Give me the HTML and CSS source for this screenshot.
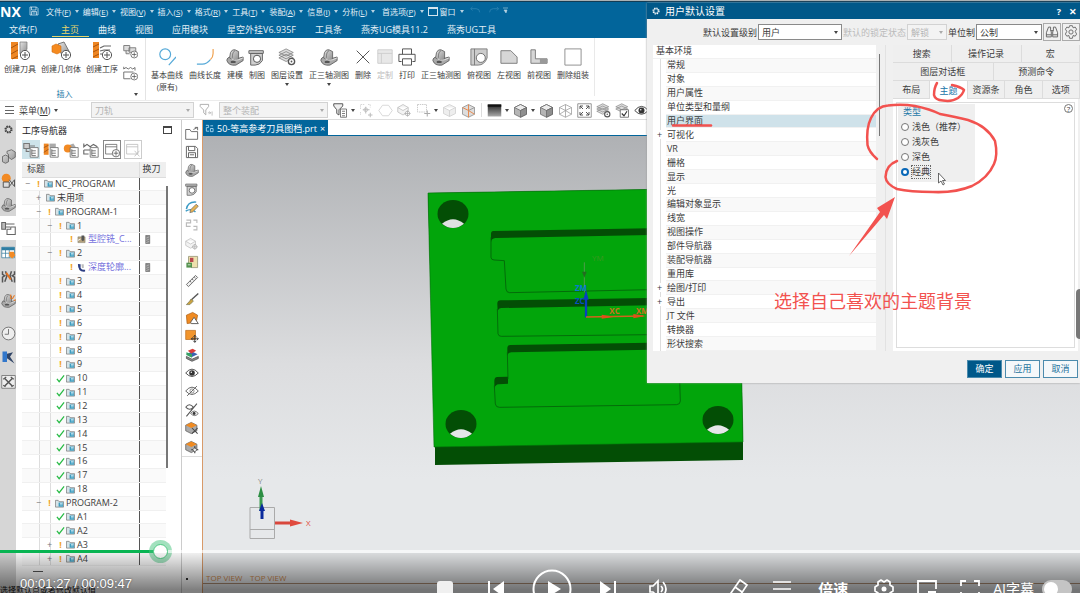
FILE: index.html
```html
<!DOCTYPE html>
<html lang="zh-CN">
<head>
<meta charset="utf-8">
<title>NX - 用户默认设置</title>
<link rel="stylesheet" href="styles.css">
</head>
<body>
<svg class="sprite" aria-hidden="true">
  <defs>
    <linearGradient id="metal" x1="0" y1="0" x2="1" y2="1"><stop offset="0" stop-color="#e4e4e4"/><stop offset="1" stop-color="#8b8b8b"/></linearGradient>
    <linearGradient id="dark" x1="0" y1="0" x2="0" y2="1"><stop offset="0" stop-color="#222"/><stop offset="1" stop-color="#aaa"/></linearGradient>
  </defs>
  <symbol id="plus" viewBox="0 0 20 20"><circle cx="15" cy="14" r="4.6" fill="#fff" stroke="#555"/><path d="M15 11v6M12 14h6" stroke="#555"/></symbol>
  <symbol id="tool" viewBox="0 0 20 20"><path d="M1 1h7v17H1z" fill="#ee8623"/><path d="M1 7l7-4M1 13l7-4M2 18l6-3" stroke="#a9540c"/><path d="M10 1h7v7l-3 5h-4z" fill="url(#metal)" stroke="#777" stroke-width=".7"/><use href="#plus"/></symbol>
  <symbol id="geom" viewBox="0 0 20 20"><path d="M7 3l6-2 6 11-8 3z" fill="url(#metal)" stroke="#777"/><path d="M1 5l4-2 5 2v6l-4 2-5-2z" fill="#f58a1f" stroke="#d56d0b" stroke-width=".6"/><use href="#plus"/></symbol>
  <symbol id="oper" viewBox="0 0 20 20"><path d="M1 1h6v16H1z" fill="#ee8623"/><path d="M1 6l6-3M1 11l6-3M1 16l6-3" stroke="#a9540c"/><path d="M8 7l4-2h7M8 10l4-1h6M8 13h3" fill="none" stroke="#666" stroke-width="1.2"/><use href="#plus"/></symbol>
  <symbol id="prog" viewBox="0 0 20 20"><path d="M1 2h8v7H1zM8 5h9v6H8zM4 9v4h5" fill="#ddd" stroke="#777" stroke-width="1.2"/><use href="#plus"/></symbol>
  <symbol id="meth" viewBox="0 0 20 20"><path d="M1 1v3l3-2 3 2 3-2 3 2 3-2v4M1 8h13M1 8v9h9" fill="none" stroke="#666" stroke-width="1.2"/><use href="#plus"/></symbol>
  <symbol id="curve" viewBox="0 0 20 20"><circle cx="8" cy="7" r="6" fill="none" stroke="#55a9d8" stroke-width="1.3"/><path d="M12 19l8-9" stroke="#55a9d8" stroke-width="1.3"/></symbol>
  <symbol id="length" viewBox="0 0 20 20"><path d="M1 18h6q5 0 9-5" fill="none" stroke="#55a9d8" stroke-width="1.3"/><path d="M16 13q3-3 3-7V1" fill="none" stroke="#efa14f" stroke-width="1.3"/></symbol>
  <symbol id="model" viewBox="0 0 20 20"><path d="M1 14q0-4 5-4l6 2 7-2v4l-8 5q-8 1-10-5z" fill="#a9a9a9" stroke="#5d5d5d"/><path d="M4 11L5 5q2-4 5-3l4 2v8l-4 2z" fill="url(#metal)" stroke="#666"/><path d="M10 3q-3 1-3 8" fill="none" stroke="#777"/><path d="M6 12q3 3 8 1l5-2" fill="none" stroke="#e6e6e6"/><ellipse cx="8" cy="15.500" rx="3" ry="1.300" fill="#555"/></symbol>
  <symbol id="draft" viewBox="0 0 20 20"><path d="M1 3h16v3H1zM3 6h13v8q-3 5-8 5H3z" fill="#d0d0d0" stroke="#666" stroke-width="1.1"/><circle cx="10" cy="12" r="4" fill="#fff" stroke="#555" stroke-width="1.1"/></symbol>
  <symbol id="layers" viewBox="0 0 20 20"><path d="M1 11l8 4 8-4-8-4zM1 8l8 4 8-4-8-4zM1 5l8 4 8-4-8-4z" fill="#ddd" stroke="#777" stroke-width=".8"/><circle cx="15" cy="15" r="3.5" fill="#fff" stroke="#555" stroke-width="1.5"/><circle cx="15" cy="15" r="1" fill="#555"/></symbol>
  <symbol id="laycheck" viewBox="0 0 20 20"><path d="M1 8l8 4 8-4-8-4zM1 5l8 4 8-4-8-4z" fill="#ddd" stroke="#777" stroke-width=".8"/><path d="M7 9h11v10H7z" fill="#fff" stroke="#555"/><path d="M9 14l3 3 4-6" fill="none" stroke="#333" stroke-width="1.500"/></symbol>
  <symbol id="del" viewBox="0 0 20 20"><path d="M3 3l14 14M17 3L3 17" stroke="#555" stroke-width="1.1"/></symbol>
  <symbol id="custom" viewBox="0 0 20 20"><path d="M2 2h16v15H2z" fill="#e8e8e8" stroke="#ccc"/><path d="M2 6h16M6 6v11" stroke="#ccc"/></symbol>
  <symbol id="print" viewBox="0 0 20 20"><path d="M5 7V1h10v6M4 15H1V7h18v8h-3M5 12h10v7H5z" fill="#fff" stroke="#555" stroke-width="1.1"/></symbol>
  <symbol id="top" viewBox="0 0 20 20"><path d="M1 1h18v10q-3 8-10 8H1z" fill="#ccc" stroke="#777"/><path d="M5 1v18" stroke="#777"/><circle cx="12" cy="11" r="5" fill="#fff" stroke="#666"/></symbol>
  <symbol id="left" viewBox="0 0 20 20"><path d="M1 3h11l7 7v7H1z" fill="#d7d7d7" stroke="#777"/></symbol>
  <symbol id="front" viewBox="0 0 20 20"><path d="M1 2h5v10h13v5H1z" fill="#d7d7d7" stroke="#777"/><path d="M11 12h8v5h-8z" fill="#999"/></symbol>
  <symbol id="blank" viewBox="0 0 20 20"><path d="M1 1h18v18H1z" fill="#fff" stroke="#888"/></symbol>
  <symbol id="save" viewBox="0 0 20 20"><path d="M2 2h13l3 3v13H2zM5 2v6h9V2M5 18v-7h10v7M7 14h6" fill="none" stroke="currentColor" stroke-width="1.4"/></symbol>
  <symbol id="funnel" viewBox="0 0 20 20"><path d="M1 2h12v3L9 10v7l-3-3v-4L1 5z" fill="none" stroke="currentColor" stroke-width="1.3"/><path d="M12 14h4l-2-2m2 2l-2 2M18 12v6" fill="none" stroke="currentColor"/></symbol>
  <symbol id="flist" viewBox="0 0 20 20"><path d="M1 1h12v3L8 9v7l-3-2V9L1 4z" fill="#eee" stroke="#555" stroke-width="1.3"/><path d="M10 8h8v11h-8z" fill="#fff" stroke="#555"/><path d="M12 11h4M12 14h4M12 17h4" stroke="#555"/></symbol>
  <symbol id="snap" viewBox="0 0 20 20"><path d="M2 8V2h6M2 12v4M12 2h3v4" fill="none" stroke="#ccc" stroke-dasharray="2 1"/><path d="M9 5v9M5 9h9M15 13v6M12 16h6" stroke="#b9b9b9" stroke-width="1.3"/><circle cx="9" cy="9" r="2.5" fill="none" stroke="#bbb"/></symbol>
  <symbol id="hex" viewBox="0 0 20 20"><path d="M6 3h8l5 7-5 7H6l-5-7z" fill="none" stroke="#ccc"/></symbol>
  <symbol id="faint" viewBox="0 0 20 20"><path d="M2 6l8-4 8 4v8l-8 4-8-4zM2 6l8 4 8-4M10 10v8" fill="#eee" stroke="#ccc"/></symbol>
  <symbol id="faintplus" viewBox="0 0 20 20"><path d="M1 6l7-4 7 4v6l-7 4-7-4zM1 6l7 4 7-4" fill="#f3f3f3" stroke="#bbb"/><circle cx="14" cy="14" r="3" fill="#fff" stroke="#aaa"/><path d="M14 10v8M10 14h8" stroke="#aaa"/></symbol>
  <symbol id="region" viewBox="0 0 20 20"><path d="M2 2h12v10H2z" fill="none" stroke="#bbb" stroke-dasharray="2 1"/><path d="M15 10v8M11 14h8" stroke="#aaa" stroke-width="1.4"/></symbol>
  <symbol id="ocube" viewBox="0 0 20 20"><path d="M2 6l8-4 8 4v9l-8 4-8-4z" fill="#ddd" stroke="#888"/><path d="M2 6l8 4v9M10 2v8l8 5" fill="none" stroke="#e8894c" stroke-width="1.3"/><path d="M10 10l8-4" stroke="#888"/></symbol>
  <symbol id="grad" viewBox="0 0 20 20"><path d="M1 2h18v16H1z" fill="url(#dark)"/><path d="M1 2h18v3H1z" fill="#111"/></symbol>
  <symbol id="cube" viewBox="0 0 20 20"><path d="M2 6l8-4 8 4v9l-8 4-8-4z" fill="#b5b5b5" stroke="#666"/><path d="M2 6l8-4 8 4-8 4z" fill="#ececec" stroke="#666"/><path d="M10 10v9l8-4V6z" fill="#8f8f8f" stroke="#666"/></symbol>
  <symbol id="wire" viewBox="0 0 20 20"><path d="M2 6l8-4 8 4v9l-8 4-8-4zM2 6l8 4 8-4M10 10v9M2 15l8-5 8 5M10 2v8" fill="none" stroke="#999"/></symbol>
  <symbol id="fit" viewBox="0 0 20 20"><path d="M1 1h18v18H1z" fill="#fff" stroke="#777"/><path d="M4 8V4h4M12 4h4v4M16 12v4h-4M8 16H4v-4M4 4l4 4M16 4l-4 4M16 16l-4-4M4 16l4-4" fill="none" stroke="#444" stroke-width="1.2"/></symbol>
  <symbol id="eye" viewBox="0 0 20 20"><path d="M1 10q9-11 18 0-9 10-18 0z" fill="#fff" stroke="#444" stroke-width="1.3"/><circle cx="10" cy="10" r="4" fill="#333"/><circle cx="9" cy="9" r="1" fill="#fff"/></symbol>
  <symbol id="noeye" viewBox="0 0 20 20"><path d="M1 10q9-11 18 0-9 10-18 0zM3 17L17 3" fill="none" stroke="#666" stroke-width="1.4"/><circle cx="10" cy="10" r="3" fill="none" stroke="#666"/></symbol>
  <symbol id="gear" viewBox="0 0 20 20"><circle cx="10" cy="10" r="7.5" fill="none" stroke="currentColor" stroke-width="3" stroke-dasharray="3.4 2.5"/><circle cx="10" cy="10" r="5.6" fill="none" stroke="currentColor" stroke-width="2"/></symbol>
  <symbol id="parts" viewBox="0 0 20 20"><path d="M2 10l4-2 4 2v7l-4 2-4-2zM8 3l6-2 5 3v7l-5 3-4-3V7L8 6z" fill="url(#metal)" stroke="#555"/></symbol>
  <symbol id="rel" viewBox="0 0 20 20"><circle cx="7" cy="7" r="6" fill="#f28a24"/><path d="M3 12h8v7H3zM11 9l7 9V9l-7 9" fill="#ddd" stroke="#555" stroke-width="1.3"/></symbol>
  <symbol id="opnav" viewBox="0 0 20 20"><path d="M1 2h5v9H1zM6 4h12M6 8h6" fill="#bbb" stroke="#666" stroke-width="1.4"/><path d="M8 11h5v-3h6v10H8z" fill="#fff" stroke="#666" stroke-width="1.4"/></symbol>
  <symbol id="grid" viewBox="0 0 20 20"><path d="M1 3h17v14H1z" fill="#fff" stroke="#3b7f9f"/><path d="M1 3h17v4H1z" fill="#2d7da3"/><path d="M1 11h17M6 4v13M11 4v13" stroke="#3b7f9f"/><path d="M11 9h6l2 5-4 4-4-3z" fill="#f28a24"/></symbol>
  <symbol id="move" viewBox="0 0 20 20"><path d="M2 3v4l3 2-3 2v7M6 3l2 6-3 8M18 3v4l-3 2 3 2v7M14 3l-2 6 3 8" fill="none" stroke="#555" stroke-width="2"/><path d="M7 5l6 9" stroke="#e8701c" stroke-width="2.500"/></symbol>
  <symbol id="sparks" viewBox="0 0 20 20"><use href="#model"/><path d="M13 8V2M15 8l3-5M17 10l3-1" stroke="#ed7d25" stroke-width="1.5"/></symbol>
  <symbol id="clock" viewBox="0 0 20 20"><circle cx="10" cy="10" r="8.5" fill="#eee" stroke="#777" stroke-width="1.3"/><path d="M10 4v7H5" fill="none" stroke="#777" stroke-width="1.3"/></symbol>
  <symbol id="blue" viewBox="0 0 20 20"><path d="M2 2h6v14H2z" fill="#3277cb"/><path d="M8 5l8-2-4 6 6 9-10-7z" fill="#314567"/></symbol>
  <symbol id="cross" viewBox="0 0 20 20"><path d="M1 2h18v17H1z" fill="#eee" stroke="#666"/><path d="M5 6l10 10M15 6L5 16" stroke="#555" stroke-width="2"/><path d="M3 7l4-3M13 4l4 3M3 15l3 2M14 17l3-2" stroke="#555" stroke-width="1.500"/></symbol>
  <symbol id="treebox" viewBox="0 0 20 20"><path d="M9 7h10v12H9z" fill="#fff" stroke="#666"/><path d="M11 9v8h5M11 11h5M11 14h5" fill="none" stroke="#555"/></symbol>
  <symbol id="v1" viewBox="0 0 20 20"><path d="M1 2h7v6H1zM4 8v4h4M8 5h7" fill="#ccc" stroke="#777" stroke-width="1.3"/><use href="#treebox"/></symbol>
  <symbol id="v2" viewBox="0 0 20 20"><path d="M1 2h6v14H1z" fill="#ee8623"/><path d="M1 7l6-3M1 13l6-4" stroke="#9c5014"/><path d="M8 2h8v5H8z" fill="#aaa"/><use href="#treebox"/></symbol>
  <symbol id="v3" viewBox="0 0 20 20"><path d="M7 4l6-2 4 6-8 4z" fill="#aaa"/><circle cx="6" cy="8" r="5" fill="#f28a24"/><use href="#treebox"/></symbol>
  <symbol id="v4" viewBox="0 0 20 20"><path d="M1 2v4l4-3 4 3 4-3 5 3M1 10h8M1 10v5h6" fill="none" stroke="#666" stroke-width="1.4"/><use href="#treebox"/></symbol>
  <symbol id="v5" viewBox="0 0 20 20"><path d="M2 3h14v12H2zM2 6h14" fill="#fff" stroke="#666"/><use href="#plus"/></symbol>
  <symbol id="v6" viewBox="0 0 20 20"><path d="M2 3h14v12H2zM2 6h14M12 11l6 7M18 11l-6 7" fill="#fff" stroke="#bbb"/></symbol>
  <symbol id="folder" viewBox="0 0 20 20"><path d="M1 3h6l2 3h10v12H1z" fill="#d5e3e8" stroke="#777" stroke-width="1.6"/><path d="M8 8h10v9H8z" fill="#3a9cc0"/><path d="M11 10h6M11 13h6" stroke="#e5f5fb" stroke-width="1.5"/></symbol>
  <symbol id="check" viewBox="0 0 20 20"><path d="M2 11l5 6L18 3" fill="none" stroke="#27bb45" stroke-width="2.8"/></symbol>
  <symbol id="mill" viewBox="0 0 20 20"><path d="M2 4h16v13H2z" fill="#b6a37e" stroke="#776"/><path d="M10 1h6v10l-3 3-3-3z" fill="#555"/><path d="M2 12l6-3" stroke="#fff" stroke-width="2"/></symbol>
  <symbol id="contour" viewBox="0 0 20 20"><path d="M2 2l6 1v8q3 5 10 4v4Q2 21 2 2z" fill="#2c3d83"/><path d="M10 3h5v8h-4z" fill="#bbb"/></symbol>
  <symbol id="cutter" viewBox="0 0 20 20"><path d="M6 1h9v18H6z" fill="#888" stroke="#444"/><path d="M7 7l7-3M7 12l7-3M7 17l7-3" stroke="#ddd"/></symbol>
  <symbol id="open" viewBox="0 0 20 20"><path d="M1 5h6l2 3h9v11H1zM12 5l6-3m-4 0h4v4" fill="none" stroke="#666" stroke-width="1.3"/></symbol>
  <symbol id="sketch" viewBox="0 0 20 20"><path d="M2 13q2-11 14-10M1 16q8-5 14 1" fill="none" stroke="#3c9bc5" stroke-width="2"/><path d="M8 14l8-8 3 3-8 8-4 1z" fill="#e6b352" stroke="#666"/></symbol>
  <symbol id="pattern" viewBox="0 0 20 20"><path d="M2 3h6v4H2v5h6M12 3h5v4M12 17h5v-5h-5" fill="none" stroke="#bbb" stroke-width="1.6"/></symbol>
  <symbol id="box" viewBox="0 0 20 20"><path d="M5 2h13v16H9v-6H5z" fill="#eee0ad" stroke="#886"/><path d="M7 4h5v6H7z" fill="#b8474d"/><path d="M2 11h8v7H2z" fill="#54924e"/><path d="M4 14h4" stroke="#fff"/></symbol>
  <symbol id="ruler" viewBox="0 0 20 20"><path d="M2 15L15 2l3 3L5 18zM7 10l2 2M10 7l2 2M13 4l2 2" fill="#eee" stroke="#666" stroke-width="1.3"/></symbol>
  <symbol id="brush" viewBox="0 0 20 20"><path d="M19 2L8 12" stroke="#555" stroke-width="2"/><path d="M9 10l3 3-5 5H2q4-4 7-8z" fill="#caa23f" stroke="#775"/></symbol>
  <symbol id="face" viewBox="0 0 20 20"><path d="M2 6l9-4 7 4-2 10-13 2z" fill="#f08b22" stroke="#aa5b10"/><path d="M8 16l5-7 6 9H9z" fill="#fff" stroke="#555" stroke-width="1.3"/></symbol>
  <symbol id="orange" viewBox="0 0 20 20"><path d="M1 2h14v13H1z" fill="#f2952c" stroke="#bd6a17"/><path d="M14 9v10M9 14h10M12 11l2-2 2 2M12 17l2 2 2-2M11 12l-2 2 2 2M17 12l2 2-2 2" fill="none" stroke="#333" stroke-width="1.300"/></symbol>
  <symbol id="rgb" viewBox="0 0 20 20"><path d="M2 12l8 4 9-4v3l-9 4-8-4z" fill="#888" stroke="#444"/><path d="M2 9l8 4 8-4-8-4z" fill="#3a62b0"/><path d="M2 6v4l8 4V9z" fill="#37a163"/><path d="M4 4l7-3 5 3-7 4z" fill="#db3e3a"/></symbol>
  <symbol id="botheye" viewBox="0 0 20 20"><path d="M1 6q5-7 11 0-5 6-11 0M2 19L17 1" fill="none" stroke="#555" stroke-width="1.5"/><path d="M8 15q5-7 11 0-5 6-11 0z" fill="#eee" stroke="#444"/><circle cx="13" cy="15" r="2" fill="#333"/></symbol>
  <symbol id="cubetool" viewBox="0 0 20 20"><path d="M1 6l8-4 8 4v8l-8 4-8-4z" fill="#aaa" stroke="#555"/><path d="M1 6l8-4 8 4-8 4z" fill="#f08b22"/><path d="M10 10l8 8M18 10l-8 8" stroke="#444" stroke-width="1.500"/></symbol>
  <symbol id="cubemove" viewBox="0 0 20 20"><path d="M1 6l8-4 8 4v8l-8 4-8-4z" fill="#aaa" stroke="#555"/><path d="M1 6l8-4 8 4-8 4z" fill="#f08b22"/><path d="M14 9v10M9 14h10" stroke="#333" stroke-width="1.500"/><path d="M14 11l3 3-3 3-3-3z" fill="#eee" stroke="#444"/></symbol>
</svg>

<div class="app">
  <header class="banner">
    <div class="titlebar">
      <strong class="brand">NX</strong>
      <button class="tb-save" aria-label="保存"><svg><use href="#save"/></svg></button>
      <nav class="menus" aria-label="菜单栏">
        <button>文件(<u>F</u>)</button><button>编辑(<u>E</u>)</button><button>视图(<u>V</u>)</button><button>插入(<u>S</u>)</button><button>格式(<u>R</u>)</button><button>工具(<u>T</u>)</button><button>装配(<u>A</u>)</button><button>信息(<u>I</u>)</button><button>分析(<u>L</u>)</button><button class="prefs">首选项(<u>P</u>)</button><button class="window"><i class="win"></i>窗口</button>
        <svg class="history" viewBox="0 0 42 10"><path d="M3 3h6q4 0 4 4M3 3l2-2M3 3l2 2M34 3h-6q-4 0-4 4M34 3l-2-2M34 3l-2 2" transform="scale(.9)" fill="none" stroke="#2a80b0"/><path d="M35 2h5M36 4h3l-1 3z" fill="#b8d3e2" stroke="#b8d3e2" stroke-width=".6"/></svg>
      </nav>
    </div>
    <nav class="tabs" aria-label="功能区">
      <a href="#" class="file">文件(F)</a><a href="#" class="active">主页</a><a href="#">曲线</a><a href="#">视图</a><a href="#">应用模块</a><a href="#">星空外挂V6.935F</a><a href="#">工具条</a><a href="#">燕秀UG模具11.2</a><a href="#">燕秀UG工具</a>
    </nav>
  </header>

  <section class="ribbon">
    <div class="insert">
      <div class="insert-row">
        <button class="rb"><svg><use href="#tool"/></svg>创建刀具</button>
        <button class="rb"><svg><use href="#geom"/></svg>创建几何体</button>
        <button class="rb"><svg><use href="#oper"/></svg>创建工序</button>
        <div class="stack"><button aria-label="创建程序"><svg><use href="#prog"/></svg></button><button aria-label="创建方法"><svg><use href="#meth"/></svg></button></div>
      </div>
      <div class="insert-title"><span>插入</span><i class="caret"></i></div>
    </div>
    <div class="views">
      <button class="rb"><svg><use href="#curve"/></svg>基本曲线<br>(原有)</button>
      <button class="rb"><svg><use href="#length"/></svg>曲线长度</button>
      <button class="rb"><svg><use href="#model"/></svg>建模</button>
      <button class="rb"><svg><use href="#draft"/></svg>制图</button>
      <button class="rb"><svg><use href="#layers"/></svg>图层设置<i class="caret"></i></button>
      <button class="rb"><svg><use href="#model"/></svg>正三轴测图<i class="caret"></i></button>
      <button class="rb"><svg><use href="#del"/></svg>删除</button>
      <button class="rb off" disabled><svg><use href="#custom"/></svg>定制</button>
      <button class="rb"><svg><use href="#print"/></svg>打印</button>
      <button class="rb"><svg><use href="#model"/></svg>正三轴测图</button>
      <button class="rb"><svg><use href="#top"/></svg>俯视图</button>
      <button class="rb"><svg><use href="#left"/></svg>左视图</button>
      <button class="rb"><svg><use href="#front"/></svg>前视图</button>
      <button class="rb"><svg><use href="#blank"/></svg>删除组装</button>
    </div>
  </section>

  <section class="selbar">
    <button class="menu-btn"><i class="burger"></i>菜单(<u>M</u>)<i class="caret"></i></button>
    <span class="pick path"><select disabled aria-label="类型过滤器"><option>刀轨</option></select></span>
    <svg class="pale"><use href="#funnel"/></svg>
    <span class="pick scope"><select disabled aria-label="选择范围"><option>整个装配</option></select></span>
    <div class="sel-icons">
      <svg><use href="#flist"/></svg><i class="caret"></i><svg><use href="#snap"/></svg><svg><use href="#hex"/></svg><svg><use href="#faintplus"/></svg><svg><use href="#region"/></svg><i class="caret"></i><svg><use href="#faint"/></svg><svg><use href="#ocube"/></svg><i class="rule"></i><svg><use href="#grad"/></svg><i class="caret"></i><svg><use href="#cube"/></svg><i class="caret"></i><svg><use href="#cube"/></svg><svg><use href="#wire"/></svg><svg><use href="#fit"/></svg><svg><use href="#layers"/></svg><svg><use href="#laycheck"/></svg><svg><use href="#eye"/></svg>
    </div>
  </section>

  <main class="work">
    <nav class="rail" aria-label="资源条">
      <button aria-label="设置" class="cfg"><svg><use href="#gear"/></svg></button>
      <button aria-label="装配导航器"><svg><use href="#parts"/></svg></button>
      <button aria-label="约束导航器"><svg><use href="#rel"/></svg></button>
      <button aria-label="部件导航器"><svg><use href="#model"/></svg></button>
      <button aria-label="工序导航器" class="active"><svg><use href="#opnav"/></svg></button>
      <button aria-label="机床导航器"><svg><use href="#grid"/></svg></button>
      <button aria-label="运动"><svg><use href="#move"/></svg></button>
      <button aria-label="重用库"><svg><use href="#sparks"/></svg></button>
      <button aria-label="历史记录" class="gap"><svg><use href="#clock"/></svg></button>
      <button aria-label="角色"><svg><use href="#blue"/></svg></button>
      <button aria-label="工具"><svg><use href="#cross"/></svg></button>
    </nav>

    <aside class="navigator">
      <div class="nav-head"><h2>工序导航器</h2><button aria-label="最大化" class="max"></button></div>
      <div class="nav-tools">
        <button class="on" aria-label="程序顺序视图"><svg><use href="#v1"/></svg></button><button aria-label="机床视图"><svg><use href="#v2"/></svg></button><button aria-label="几何视图"><svg><use href="#v3"/></svg></button><button aria-label="加工方法视图"><svg><use href="#v4"/></svg></button><button class="boxed" aria-label="新建"><svg><use href="#v5"/></svg></button><button class="boxed off" aria-label="关闭" disabled><svg><use href="#v6"/></svg></button>
      </div>
      <div class="nav-body">
        <table class="ops">
          <thead><tr><th>标题</th><th>换刀</th></tr></thead>
          <tbody>
            <tr><td class="l0"><div><b>−</b><em>!</em><svg><use href="#folder"/></svg>NC_PROGRAM</div></td><td></td></tr>
            <tr><td class="l1"><div><b>+</b><svg><use href="#folder"/></svg>未用项</div></td><td></td></tr>
            <tr><td class="l1"><div><b>−</b><em>!</em><svg><use href="#folder"/></svg>PROGRAM-1</div></td><td></td></tr>
            <tr><td class="l2"><div><b>−</b><em>!</em><svg><use href="#folder"/></svg>1</div></td><td></td></tr>
            <tr><td class="l3"><div><b></b><em>!</em><svg><use href="#mill"/></svg><a href="#">型腔铣_C...</a></div></td><td><svg><use href="#cutter"/></svg></td></tr>
            <tr><td class="l2"><div><b>−</b><em>!</em><svg><use href="#folder"/></svg>2</div></td><td></td></tr>
            <tr><td class="l3"><div><b></b><em>!</em><svg><use href="#contour"/></svg><a href="#">深度轮廓...</a></div></td><td><svg><use href="#cutter"/></svg></td></tr>
            <tr><td class="l2"><div><b></b><em>!</em><svg><use href="#folder"/></svg>3</div></td><td></td></tr>
            <tr><td class="l2"><div><b></b><em>!</em><svg><use href="#folder"/></svg>4</div></td><td></td></tr>
            <tr><td class="l2"><div><b></b><em>!</em><svg><use href="#folder"/></svg>5</div></td><td></td></tr>
            <tr><td class="l2"><div><b></b><em>!</em><svg><use href="#folder"/></svg>6</div></td><td></td></tr>
            <tr><td class="l2"><div><b></b><em>!</em><svg><use href="#folder"/></svg>7</div></td><td></td></tr>
            <tr><td class="l2"><div><b></b><em>!</em><svg><use href="#folder"/></svg>8</div></td><td></td></tr>
            <tr><td class="l2"><div><b></b><em>!</em><svg><use href="#folder"/></svg>9</div></td><td></td></tr>
            <tr><td class="l2"><div><b></b><svg><use href="#check"/></svg><svg><use href="#folder"/></svg>10</div></td><td></td></tr>
            <tr><td class="l2"><div><b></b><svg><use href="#check"/></svg><svg><use href="#folder"/></svg>11</div></td><td></td></tr>
            <tr><td class="l2"><div><b></b><svg><use href="#check"/></svg><svg><use href="#folder"/></svg>12</div></td><td></td></tr>
            <tr><td class="l2"><div><b></b><svg><use href="#check"/></svg><svg><use href="#folder"/></svg>13</div></td><td></td></tr>
            <tr><td class="l2"><div><b></b><svg><use href="#check"/></svg><svg><use href="#folder"/></svg>14</div></td><td></td></tr>
            <tr><td class="l2"><div><b></b><svg><use href="#check"/></svg><svg><use href="#folder"/></svg>15</div></td><td></td></tr>
            <tr><td class="l2"><div><b></b><svg><use href="#check"/></svg><svg><use href="#folder"/></svg>16</div></td><td></td></tr>
            <tr><td class="l2"><div><b></b><svg><use href="#check"/></svg><svg><use href="#folder"/></svg>17</div></td><td></td></tr>
            <tr><td class="l2"><div><b></b><svg><use href="#check"/></svg><svg><use href="#folder"/></svg>18</div></td><td></td></tr>
            <tr><td class="l1"><div><b>−</b><em>!</em><svg><use href="#folder"/></svg>PROGRAM-2</div></td><td></td></tr>
            <tr><td class="l2"><div><b></b><svg><use href="#check"/></svg><svg><use href="#folder"/></svg>A1</div></td><td></td></tr>
            <tr><td class="l2"><div><b></b><svg><use href="#check"/></svg><svg><use href="#folder"/></svg>A2</div></td><td></td></tr>
            <tr><td class="l2"><div><b>+</b><em>!</em><svg><use href="#folder"/></svg>A3</div></td><td></td></tr>
            <tr><td class="l2"><div><b>+</b><em>!</em><svg><use href="#folder"/></svg>A4</div></td><td></td></tr>
          </tbody>
        </table>
        <i class="thumb"></i>
      </div>
      <i class="hbar"></i>
      <p class="status">选择默认点或者修改默认值</p>
    </aside>

    <div class="sidebar">
      <div class="side-icons">
        <svg><use href="#open"/></svg><svg><use href="#save"/></svg><svg><use href="#model"/></svg><svg><use href="#draft"/></svg><svg><use href="#sketch"/></svg><svg><use href="#pattern"/></svg><svg><use href="#faintplus"/></svg><svg><use href="#box"/></svg><svg><use href="#ruler"/></svg><svg><use href="#brush"/></svg><svg><use href="#face"/></svg><svg><use href="#orange"/></svg><svg><use href="#rgb"/></svg><svg><use href="#eye"/></svg><svg><use href="#noeye"/></svg><svg><use href="#botheye"/></svg><svg><use href="#cubetool"/></svg><svg><use href="#cubemove"/></svg>
      </div>
      <i class="dot"></i>
    </div>

    <section class="stage">
      <div class="doc-tabs"><button class="doc"><svg viewBox="0 0 20 20"><path d="M2 3h6v5H3v8h6M12 4h6M12 10h6v7h-6z" fill="none" stroke="#a8d8f2" stroke-width="2"/></svg>50-等高参考刀具图档.prt<span>×</span></button></div>
      <div class="canvas">
        <svg class="scene" viewBox="203 137 877 456" preserveAspectRatio="xMinYMin meet">
          <path d="M428 194L738 189 743 444V461L435 466V448Z" fill="#034e05"/>
          <path d="M428 194L738 189 743 443 434 448Z" fill="#02a50b" stroke="#04720a" stroke-width=".6"/>
          <g>
            <g transform="translate(453 215)"><ellipse rx="15.500" ry="14" fill="#034e05"/><path d="M-11 9.800Q0 .5 11 9.800 6 14 0 14 -6 14 -11 9.800Z" fill="#dfe1e2"/></g>
            <g transform="translate(461 425)"><ellipse rx="15.500" ry="14" fill="#034e05"/><path d="M-11 9.800Q0 .5 11 9.800 6 14 0 14 -6 14 -11 9.800Z" fill="#e5e7e8"/></g>
            <g transform="translate(718 421)"><ellipse rx="15.500" ry="14" fill="#034e05"/><path d="M-11 9.800Q0 .5 11 9.800 6 14 0 14 -6 14 -11 9.800Z" fill="#e5e7e8"/></g>
          </g>
          <g transform="translate(420 180) scale(.333333)">
            <g fill="#034e05">
              <path d="M213 165Q213 156 220 156L690 148V168L226 177Q214 178 213 190Z"/>
              <path d="M232 374Q232 364 242 364L690 357V379L245 387Q234 388 233 398Z"/>
              <path d="M262 508Q262 498 272 498L690 491V512L274 520Q264 521 262 530Z"/>
              <path d="M223 605Q223 595 232 594L264 593V614L236 616Q226 617 223 628Z"/>
            </g>
            <g fill="none" stroke="#04620a" stroke-width="2.500">
              <path d="M213 175V235Q214 243 222 243L253 245 258 330Q259 341 269 341L690 332"/>
              <path d="M232 390L234 464Q235 472 244 472L690 467"/>
              <path d="M262 520L264 600M223 620L226 675Q228 685 238 685L770 677Q781 676 781 666L779 600"/>
            </g>
            <path d="M493 250V340" stroke="#4f9b4b" stroke-width="3"/><path d="M486 278h14l-7 18z" fill="#236d20"/><text x="516" y="246" class="axis" fill="#3b9a20">YM</text>
            <path d="M498 415V350" stroke="#083fc0" stroke-width="7"/><path d="M490 362l8-30 8 30z" fill="#083fc0"/>
            <path d="M498 414L670 411" stroke="#d0641c" stroke-width="4"/><path d="M545 407l40 6-40 6zM640 405l38 6-38 7z" fill="#e0501c"/>
            <g class="axis bold"><text x="465" y="337" fill="#087ad0">ZM</text><text x="465" y="374" fill="#0850c0">ZC</text><text x="568" y="406" fill="#ce7020">XC</text><text x="648" y="404" fill="#ce7020">XM</text></g>
          </g>
          <path d="M250 508.500H274.500V539.500H250ZM250 530.500H274.500" fill="none" stroke="#aaa"/>
          <path d="M261 512V497" stroke="#3a9a50" stroke-width="3"/><path d="M258 498l3-11 3 11z" fill="#2c8e43"/>
          <path d="M262 520V511" stroke="#0a2a9c" stroke-width="3"/><path d="M259 512l3-8 3 8z" fill="#0a2a9c"/>
          <path d="M275 524H292" stroke="#d8473c" stroke-width="3"/><path d="M290 520.500l13 3.500-13 3.500z" fill="#e04a3e"/>
          <text x="258" y="485" class="triad" fill="#888">Y</text><text x="306" y="527" class="triad" fill="#e04a3e">X</text>
          <text x="206" y="582" class="view" fill="#cf8a4e">TOP VIEW</text><text x="250" y="582" class="view" fill="#cf8a4e">TOP VIEW</text>
          <path d="M203 584.500H1080" stroke="#a98b72"/>
        </svg>
      </div>
    </section>
  </main>

  <section class="dialog" role="dialog" aria-label="用户默认设置">
    <header class="dlg-head"><svg><use href="#gear"/></svg><h1>用户默认设置</h1><button aria-label="帮助">?</button><button aria-label="关闭">✕</button></header>
    <div class="dlg-filter">
      <label for="lvl">默认设置级别</label><span class="pick lvl"><select id="lvl"><option>用户</option></select></span>
      <label for="lock" class="off">默认的锁定状态</label><span class="pick lock"><select id="lock" disabled><option>解锁</option></select></span>
      <label for="unit">单位制</label><span class="pick unit"><select id="unit"><option>公制</option></select></span>
      <button class="sq" aria-label="查找"><svg viewBox="0 0 20 20"><path d="M5 3h3v4l1 3v7H2v-6zM12 3h3l3 8v6h-7v-7l1-3zM8 8h4M2 14h7M11 14h7" fill="none" stroke="#666" stroke-width="1.400"/></svg></button>
      <button class="sq" aria-label="管理设置"><svg viewBox="0 0 20 20"><path d="M8 1h4l1 3 3-1 2 3-2 3 2 4-2 3-3-1-1 4H8l-1-4-3 1-2-3 2-4-2-3 2-3 3 1z" fill="none" stroke="#666" stroke-width="1.300"/><circle cx="10" cy="10" r="3" fill="none" stroke="#666" stroke-width="1.300"/></svg></button>
    </div>
    <div class="dlg-main">
      <ul class="cats">
        <li class="root">基本环境</li><li>常规</li><li>对象</li><li>用户属性</li><li>单位类型和量纲</li><li class="sel">用户界面</li><li class="more">可视化</li><li>VR</li><li>栅格</li><li>显示</li><li>光</li><li>编辑对象显示</li><li>线宽</li><li>视图操作</li><li>部件导航器</li><li>装配导航器</li><li>重用库</li><li class="more">绘图/打印</li><li class="more">导出</li><li>JT 文件</li><li>转换器</li><li>形状搜索</li>
      </ul>
      <div class="split"><i></i></div>
      <div class="pane">
        <div class="ptabs"><button class="w5">搜索</button><button class="w6">操作记录</button><button class="w5">宏</button></div>
        <div class="ptabs"><button class="w7">图层对话框</button><button class="w6">预测命令</button></div>
        <div class="ptabs"><button>布局</button><button class="active">主题</button><button>资源条</button><button>角色</button><button>选项</button></div>
        <div class="page">
          <fieldset>
            <legend>类型</legend>
            <label><input type="radio" name="theme">浅色（推荐）</label>
            <label><input type="radio" name="theme">浅灰色</label>
            <label><input type="radio" name="theme">深色</label>
            <label><input type="radio" name="theme" checked><span class="focus">经典</span></label>
          </fieldset>
          <button class="help" aria-label="帮助">?</button>
        </div>
      </div>
    </div>
    <footer class="dlg-foot"><button class="primary">确定</button><button>应用</button><button>取消</button></footer>
    <svg class="marks" viewBox="647 3 433 379" preserveAspectRatio="xMinYMin meet" aria-hidden="true">
      <g fill="none" stroke="#f2524f" stroke-width="2.500" stroke-linecap="round" stroke-linejoin="round">
        <path d="M673 125.500H711"/>
        <path d="M937 83Q934 88 934 95 935 100 943 100.500 952 102 958 98 963 94 964 90 961 87 952 85"/>
        <path d="M877 159Q869 152 867.500 145 866 128 871 118 877 106 888 105.500 902 104 915 106 930 109 940 114 956 117 968 120 987 126 995 141 998 155 994 164 988 178 972 186 955 193 933 192 910 192 897 189 886 184 885.500 177 886 165 897 161"/>
      </g>
      <path d="M849 256L880 212 877 208 895 197 887 219 884 215Z" fill="#f2524f"/>
      <path d="M938.500 173v10l2.500-2 2 4 1.500-1-2-3.500h3z" fill="#fff" stroke="#444" stroke-width=".8"/>
      <text x="774" y="308" class="note">选择自己喜欢的主题背景</text>
    </svg>
  </section>
  <i class="edge"></i>

  <section class="player" aria-label="视频播放器">
    <div class="track"><i class="done"></i><i class="knob"></i><i class="left"></i></div>
    <div class="controls">
      <time class="time">00:01:27 / 00:09:47</time>
      <div class="play-group">
        <button aria-label="停止" class="stop"></button>
        <button aria-label="上一个"><svg viewBox="0 0 20 20"><path d="M3 2v16" stroke="#fff" stroke-width="2"/><path d="M18 2v16L7 10z" fill="#fff"/></svg></button>
        <button aria-label="播放" class="play"><svg viewBox="0 0 40 40"><circle cx="20" cy="20" r="18.500" fill="none" stroke="#fff" stroke-width="2"/><path d="M16 12l13 8-13 8z" fill="#fff"/></svg></button>
        <button aria-label="下一个"><svg viewBox="0 0 20 20"><path d="M17 2v16" stroke="#fff" stroke-width="2"/><path d="M2 2v16l11-8z" fill="#fff"/></svg></button>
        <button aria-label="音量"><svg viewBox="0 0 20 20"><path d="M1 7h3l5-5v16l-5-5H1zM12 7q3 3 0 6M14 3q6 7 0 14" fill="none" stroke="#fff" stroke-width="1.700"/></svg></button>
      </div>
      <div class="extra">
        <button aria-label="标记"><svg viewBox="0 0 20 20"><path d="M11 1l7 5-8 12H5l-3-4zM6 8l7 5" fill="none" stroke="#fff" stroke-width="1.700"/></svg></button>
        <button aria-label="列表"><svg viewBox="0 0 20 20"><path d="M1 3h18M1 10h18M1 17h18" stroke="#fff" stroke-width="1.700"/></svg></button>
        <button class="speed">倍速</button>
        <button aria-label="设置"><svg viewBox="0 0 20 20"><path d="M7 1l3 2 3-2 3 2v3l3 2v4l-3 2v3l-3 2-3-2-3 2-3-2v-3l-3-2V8l3-2V3z" fill="none" stroke="#fff" stroke-width="1.700" stroke-linejoin="round"/><circle cx="10" cy="10" r="2.500" fill="#fff"/></svg></button>
        <button aria-label="小窗"><svg viewBox="0 0 20 20"><path d="M8 18H1V2h18v8" fill="none" stroke="#fff" stroke-width="1.800"/><path d="M11 12h8v6h-8z" fill="#fff"/></svg></button>
        <button aria-label="全屏"><svg viewBox="0 0 20 20"><path d="M1 7V2h5M14 2h5v5M19 13v5h-5M6 18H1v-5" fill="none" stroke="#fff" stroke-width="1.800"/></svg></button>
        <label class="ai">AI字幕<input type="checkbox"><i></i></label>
      </div>
    </div>
  </section>
</div>
</body>
</html>
```
FILE: styles.css
```css
* { box-sizing: border-box; }
body {
  margin: 0;
  font: 9px/13px "Open Sans", "Noto Sans CJK SC", sans-serif;
  color: #3c3c3c;
}
button, select, input { font: inherit; color: inherit; }
button { padding: 0; border: 0; background: none; white-space: nowrap; }
a { color: inherit; text-decoration: none; }
h1, h2, p, ul, fieldset { margin: 0; padding: 0; border: 0; font-weight: 400; }
i { display: block; flex: none; }
svg { display: block; flex: none; }
.sprite { width: 0; height: 0; position: absolute; }
.caret { border: 2px solid transparent; border-top: 3px solid #444; border-bottom: 0; }

.app {
  position: relative;
  display: flex;
  flex-direction: column;
  height: 100vh;
  overflow: hidden;
  background: #fff;
  border-top: 1px solid #a9b1b4;
}

/* Title bar and ribbon tabs */
.banner { background: #02659b; color: #e3eff6; border-top: 1px solid #123c55; }
.titlebar { display: flex; align-items: center; height: 18px; font-size: 8px; }
.brand { width: 29px; font-size: 14px; color: #fff; }
.tb-save svg { width: 10px; height: 10px; }
.menus { display: flex; align-items: center; margin-left: 7px; gap: 4px; }
.menus button { display: flex; align-items: center; }
.menus u { text-underline-offset: 1px; }
.menus button::after { content: ""; margin-left: 4px; border: 2px solid transparent; border-top: 3px solid #b8d3e2; border-bottom: 0; }
.menus .prefs { margin-left: 3px; }
.win { width: 10px; height: 9px; border: 1px solid #d5e6ef; border-top-width: 2px; margin-right: 2px; }
.history { width: 42px; height: 10px; }
.tabs { display: flex; height: 18px; }
.tabs a { padding: 3px 10px 0 9px; height: 17px; white-space: nowrap; }
.tabs .file { margin-right: 5px; }
.tabs .active { color: #e7d56b; border-bottom: 1px solid #e7d56b; }

/* Ribbon */
.ribbon { display: flex; height: 62px; font-size: 8px; line-height: 12px; }
.rb { display: flex; flex-direction: column; align-items: center; line-height: 12px; }
.rb svg { width: 20px; height: 20px; margin-bottom: 2px; }
.rb .caret { margin-top: 2px; }
.off { color: #bbb; }
.insert { display: flex; flex-direction: column; justify-content: space-between; width: 146px; padding: 3px 4px 0; border-right: 1px solid #e4e4e4; }
.insert-row { display: flex; gap: 5px; }
.stack { display: flex; flex-direction: column; gap: 7px; padding-top: 3px; }
.stack svg { width: 15px; height: 15px; }
.insert-title { display: flex; align-items: center; justify-content: center; padding-right: 16px; color: #2479a8; position: relative; }
.insert-title .caret { position: absolute; right: 3px; }
.views { display: flex; align-items: flex-start; gap: 6px; padding: 9px 5px 0; border-right: 1px solid #e9e9e9; margin-bottom: 4px; }
.views svg { width: 18px; height: 18px; margin: 1px -1px 3px; }

/* Selection bar */
.selbar { display: flex; align-items: center; height: 20px; padding-left: 5px; border-top: 1px solid #ececec; border-bottom: 1px solid #ddd; }
.menu-btn { display: flex; align-items: center; gap: 0; width: 86px; }
.menu-btn .caret { margin-left: 4px; }
.burger { width: 9px; height: 8px; margin-right: 5px; border-top: 1px solid #666; border-bottom: 1px solid #666; background: linear-gradient(#666, #666) center / 100% 1px no-repeat; }
.pick { position: relative; display: block; }
.pick select { appearance: none; display: block; width: 100%; height: 16px; padding: 0 3px; border: 1px solid #8a8a8a; border-radius: 0; background: #fff; opacity: 1; }
.pick select:disabled { color: #b4b4b4; border-color: #d2d2d2; background: #f3f3f3; }
.pick::after { content: ""; position: absolute; right: 4px; top: 7px; border: 2px solid transparent; border-top: 3px solid #444; border-bottom: 0; pointer-events: none; }
.pick:has(:disabled)::after { border-top-color: #aaa; }
.path { width: 103px; }
.scope { width: 109px; }
.pale { width: 15px; height: 14px; color: #aaa; margin: 0 5px; }
.sel-icons { display: flex; align-items: center; gap: 4px; margin-left: 5px; }
.sel-icons svg { width: 15px; height: 15px; }
.sel-icons .caret { margin-left: -1px; }
.rule { width: 1px; height: 14px; background: #ddd; margin: 0 1px; }

/* Work area */
.work { display: flex; flex: 1; min-height: 0; }
.rail { width: 16px; background: #d6d6d6; display: flex; flex-direction: column; }
.rail button { height: 24px; display: flex; align-items: center; justify-content: center; overflow: hidden; }
.rail svg { width: 15px; height: 15px; }
.rail .cfg { height: 18px; margin-bottom: 6px; }
.rail .cfg svg { width: 9px; height: 9px; }
.rail .gap { margin-top: 9px; }
.rail .active { background: #fff; }

.navigator { position: relative; width: 166px; padding-left: 6px; border-right: 1px solid #ccc; display: flex; flex-direction: column; }
.nav-head { display: flex; align-items: center; justify-content: space-between; height: 20px; padding-right: 9px; }
.nav-head h2 { font-size: 9px; color: #222; }
.max { width: 9px; height: 8px; border: 1px solid #444; border-top-width: 2px; }
.nav-tools { display: flex; gap: 2px; height: 22px; }
.nav-tools button { width: 18px; height: 19px; display: grid; place-items: center; }
.nav-tools svg { width: 16px; height: 16px; }
.nav-tools .on { background: #cde3ea; }
.nav-tools .boxed { border: 1px solid #888; margin-left: 1px; }
.nav-tools .boxed.off { border-color: #ccc; }
.nav-body { display: flex; }
.ops { width: 144px; height: 404px; border-collapse: collapse; table-layout: fixed; line-height: 12px; }
.ops th { height: 15px; padding: 0 5px; text-align: left; font-weight: 400; background: #efefef; border-bottom: 1px solid #ddd; }
.ops th:last-child { width: 27px; padding: 0 3px; border-left: 1px solid #ddd; white-space: nowrap; }
.ops td { padding: 0 0 0 3px; white-space: nowrap; overflow: hidden; border-bottom: 1px solid #f0f0f0; }
.ops tbody tr:nth-child(even) { background: #fafafa; }
.ops tbody td:last-child { border-left: 1px solid #555; }
.ops td div { display: flex; align-items: center; height: 12px; }
.ops b { width: 9px; flex: none; font-weight: 400; color: #777; }
.ops em { width: 9px; flex: none; font-style: normal; font-weight: 700; color: #f1a52a; text-align: center; }
.ops svg { width: 9px; height: 9px; }
.ops div svg:last-of-type { margin: 0 2px 0 1px; }
.ops a { color: #7470dc; }
.ops .l1 { padding-left: 14px; background: linear-gradient(#ddd, #ddd) 17px 0 / 1px 100% no-repeat; }
.ops .l2 { padding-left: 25px; background: linear-gradient(#ddd, #ddd) 17px 0 / 1px 100% no-repeat, linear-gradient(#ddd, #ddd) 28px 0 / 1px 100% no-repeat; }
.ops .l3 { padding-left: 36px; background: linear-gradient(#ddd, #ddd) 17px 0 / 1px 100% no-repeat, linear-gradient(#ddd, #ddd) 28px 0 / 1px 100% no-repeat; }
.thumb { width: 2px; height: 282px; margin-top: 24px; background: #777; }
.hbar { width: 10px; height: 1px; background: #555; margin: 5px 0 0 11px; }
.status { position: absolute; left: -16px; bottom: -3px; font-size: 8px; line-height: 12px; color: #111; }

.sidebar { width: 20px; background: #fff; }
.side-icons { display: grid; grid-auto-rows: 1fr; justify-items: center; align-items: center; height: 333px; margin-top: 4px; color: #666; border-bottom: 1px solid #ddd; }
.side-icons svg { width: 14px; height: 14px; }
.dot { width: 2px; height: 2px; background: #333; margin: 121px 0 0 4px; }

.stage { flex: 1; min-width: 0; display: flex; flex-direction: column; border-left: 1px solid #d89a69; }
.doc-tabs { height: 16px; background: #fff; border-bottom: 1px solid #02659b; }
.doc { display: flex; align-items: center; gap: 3px; height: 16px; padding: 0 3px 0 2px; background: #02659b; color: #fff; font-size: 9px; }
.doc svg { width: 9px; height: 9px; }
.canvas { flex: 1; min-height: 0; background: linear-gradient(#afb1b4, #dcdddf 50%, #e6e8ea 75%); }
.scene { width: 100%; height: 100%; }
.axis { font-size: 24px; }
.bold { font-weight: 700; }
.triad { font-size: 8px; }
.view { font-size: 8px; }

/* Settings dialog */
.dialog { position: absolute; left: 647px; right: 0; top: 2px; height: 380px; background: #f0f0f0; display: flex; flex-direction: column; box-shadow: 0 0 2px #999; }
.dlg-head { display: flex; align-items: center; height: 16px; padding-left: 5px; background: #005889; color: #fff; }
.dlg-head svg { width: 8px; height: 8px; }
.dlg-head h1 { flex: 1; margin-left: 5px; font-size: 10px; }
.dlg-head button { width: 14px; font-weight: 700; }
.dlg-filter { display: flex; align-items: center; justify-content: flex-end; gap: 1px; height: 26px; white-space: nowrap; }
.lvl { width: 84px; }
.lock { width: 40px; }
.unit { width: 66px; }
.sq { width: 18px; height: 18px; border: 1px solid #aaa; display: grid; place-items: center; }
.sq svg { width: 14px; height: 14px; }
.dlg-main { display: flex; height: 306px; padding-left: 6px; }
.cats { flex: 1; display: grid; grid-auto-rows: 1fr; list-style: none; background: linear-gradient(#ddd, #ddd) 7px 14px / 1px 100% no-repeat #fff; }
.cats li { position: relative; display: flex; align-items: center; margin-left: 13px; padding-left: 1px; border-bottom: 1px solid #f1f1f1; line-height: 12px; }
.cats li:nth-child(even) { background: #f9f9f9; }
.cats .root { margin-left: 0; padding-left: 3px; }
.cats .sel.sel { background: #cfe2ea; }
.cats .more::before { content: "+"; position: absolute; left: -9px; background: #fff; line-height: 9px; }
.split { width: 10px; margin-right: 7px; padding: 9px 0 0 3px; border-right: 1px solid #e2e2e2; }
.split i { width: 1px; height: 82px; background: #777; }
.pane { width: 187px; display: flex; flex-direction: column; }
.ptabs { display: flex; height: 18px; }
.ptabs button { flex: 1; border-right: 1px solid #dcdcdc; border-bottom: 1px solid #dcdcdc; background: #efefef; }
.ptabs .w5 { flex: 5; }
.ptabs .w6 { flex: 6; }
.ptabs .w7 { flex: 7; }
.ptabs .active { background: #fff; color: #1773a8; border-bottom: 0; }
.page { flex: 1; display: flex; justify-content: space-between; align-items: flex-start; margin-right: 2px; padding: 3px; border: 2px solid #fff; outline: 1px solid #ddd; outline-offset: -4px; background: #fff; }
.page fieldset { width: 77px; padding: 0 3px 3px; background: #efefef; display: flex; flex-direction: column; }
.page legend { float: left; padding: 0 0 0 2px; color: #2479a8; line-height: 15px; }
.page label { display: flex; align-items: center; height: 15px; white-space: nowrap; }
.page input { appearance: none; width: 8px; height: 8px; margin: 0 3px 0 0; border: 1px solid #777; border-radius: 50%; background: #fff; }
.page input:checked { border: 2px solid #0968b8; }
.focus { outline: 1px dotted #666; line-height: 12px; }
.help { width: 9px; height: 9px; border: 1px solid #777; border-radius: 50%; font-size: 8px; line-height: 7px; }
.dlg-foot { flex: 1; display: flex; align-items: center; justify-content: flex-end; gap: 3px; padding: 3px 2px 0 0; }
.dlg-foot button { width: 35px; height: 18px; border: 1px solid #4c8bad; color: #24729d; background: #f5f8fa; }
.dlg-foot .primary { background: #005889; color: #fff; }
.marks { position: absolute; inset: 0; width: 100%; height: 100%; pointer-events: none; }
.note { font-size: 18px; fill: #f2524f; }
.edge { position: absolute; right: 0; top: 288px; width: 4px; height: 50px; background: #777; border-radius: 4px 0 0 4px; }

/* Video player overlay */
.player { position: absolute; left: 0; right: 0; bottom: -21px; }
.track { display: flex; align-items: center; height: 4px; }
.done { width: 14.8%; height: 3px; background: #08b452; }
.left { flex: 1; height: 3px; background: rgba(255, 255, 255, .6); }
.knob { width: 15px; height: 15px; margin-left: -7px; border-radius: 50%; background: #fff; border: 1px solid #4fc983; box-shadow: 0 0 0 4px rgba(70, 195, 125, .5); }
.controls { position: relative; display: flex; align-items: center; height: 61px; padding: 11px 8px 0 20px; background: linear-gradient(rgba(0, 0, 0, .06), rgba(0, 0, 0, .5) 60%); color: #fff; }
.controls svg { width: 20px; height: 20px; }
.time { flex: 1; font: 13px/16px "Liberation Sans", sans-serif; margin-bottom: 11px; text-shadow: 0 0 2px #444; }
.play-group { display: flex; align-items: center; gap: 31px; margin-left: 14px; }
.play-group .stop { width: 16px; height: 16px; background: #f0f0f0; border-radius: 3px; margin-right: 2px; }
.controls .play svg { width: 40px; height: 40px; }
.controls .play { margin: 0 -5px; }
.extra { flex: 1; display: flex; align-items: center; justify-content: flex-end; gap: 23px; }
.speed { margin: 0 3px; font-size: 15px; font-weight: 700; line-height: 20px; }
.ai { position: relative; display: flex; align-items: center; font-size: 14px; line-height: 20px; margin-left: -10px; white-space: nowrap; }
.ai input { appearance: none; width: 30px; height: 18px; margin: 0 0 0 8px; border-radius: 9px; background: #c4c4c4; }
.ai i { position: absolute; right: 14px; width: 14px; height: 14px; background: #fff; border-radius: 50%; }
```
